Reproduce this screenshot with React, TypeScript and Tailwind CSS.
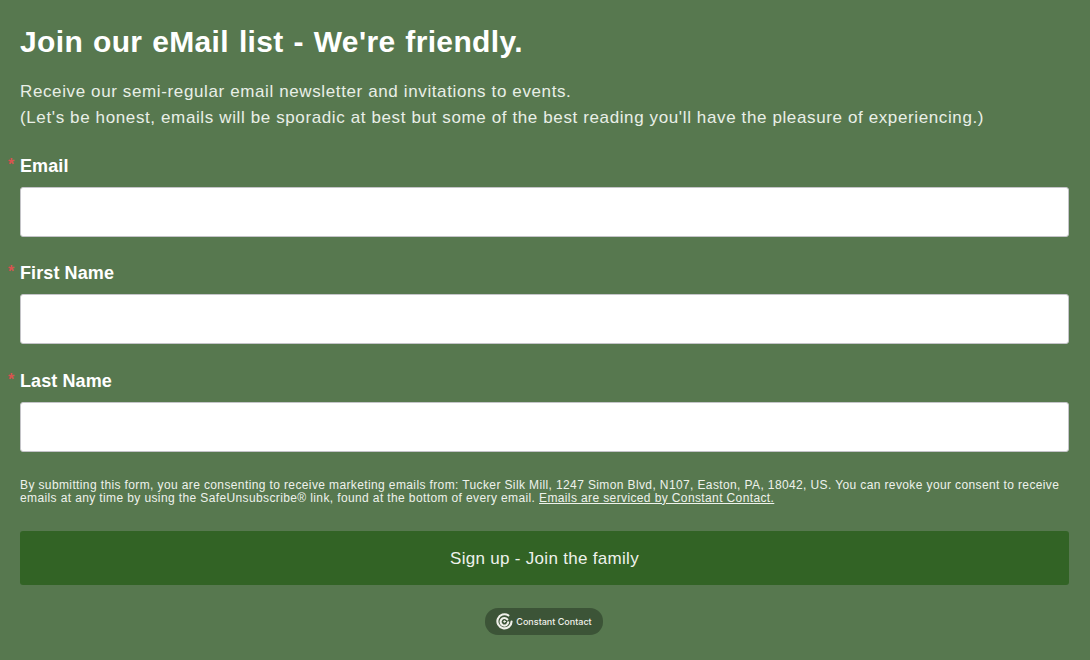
export default function App() {
  const fields = ["Email", "First Name", "Last Name"];
  return (
    <div className="h-[660px] w-[1090px] overflow-hidden bg-[#57784f] px-5 pt-[22px] text-white" style={{ fontFamily: '"Liberation Sans", Arial, sans-serif' }}>
      <h1 className="h-[40px] text-[30px] leading-[40px] font-bold tracking-[0.35px] [word-spacing:1.2px]">Join our eMail list - We're friendly.</h1>
      <div className="mt-[17px] text-[17px] leading-[26px] tracking-[0.62px] text-[#e9efe7]">
        <p>Receive our semi-regular email newsletter and invitations to events.</p>
        <p>(Let's be honest, emails will be sporadic at best but some of the best reading you'll have the pleasure of experiencing.)</p>
      </div>
      <div className="mt-[22px] flex w-[1049px] flex-col gap-[23.4px]">
        {fields.map((f) => (
          <div key={f}>
            <label className="relative block h-[26px] text-[18px] leading-[26px] font-bold tracking-[0.1px]">
              <span className="absolute left-[-12px] top-[-1px] text-[16px] text-[#d9534f]">*</span>
              {f}
            </label>
            <input className="mt-[8px] block h-[50px] w-full rounded-[3px] border border-[#c4c4c8] bg-white" />
          </div>
        ))}
      </div>
      <p className="mt-[27px] w-[1049px] text-[12px] leading-[13px] tracking-[0.38px] text-[#eef2ec]">
        By submitting this form, you are consenting to receive marketing emails from: Tucker Silk Mill, 1247 Simon Blvd, N107, Easton, PA, 18042, US. You can revoke your consent to receive emails at any time by using the SafeUnsubscribe® link, found at the bottom of every email. <a className="underline">Emails are serviced by Constant Contact.</a>
      </p>
      <button className="mt-[26px] block h-[54px] w-[1049px] rounded-[3px] bg-[#326325] pt-[2px] text-[17px] tracking-[0.3px] text-[#eef2ec]">Sign up - Join the family</button>
      <div className="mt-[23px] flex justify-center pr-[2px]">
        <div className="flex h-[27px] w-[118px] items-center justify-center gap-[3px] rounded-[13px] bg-[#3c5437]">
          <svg width="17" height="17" viewBox="0 0 24 24" fill="none" stroke="#f0f0ea" strokeWidth="3" strokeLinecap="round">
            <path d="M17.5 3.4A10 10 0 1 0 22 12" />
            <path d="M16 9A5.4 5.4 0 1 0 17.2 13" />
            <circle cx="12" cy="12" r="1.2" fill="#f0f0ea" strokeWidth="1" />
          </svg>
          <span className="text-[9px] font-medium text-[#f0f0ea]" style={{ fontFamily: 'Inter, sans-serif' }}>Constant Contact</span>
        </div>
      </div>
    </div>
  );
}
